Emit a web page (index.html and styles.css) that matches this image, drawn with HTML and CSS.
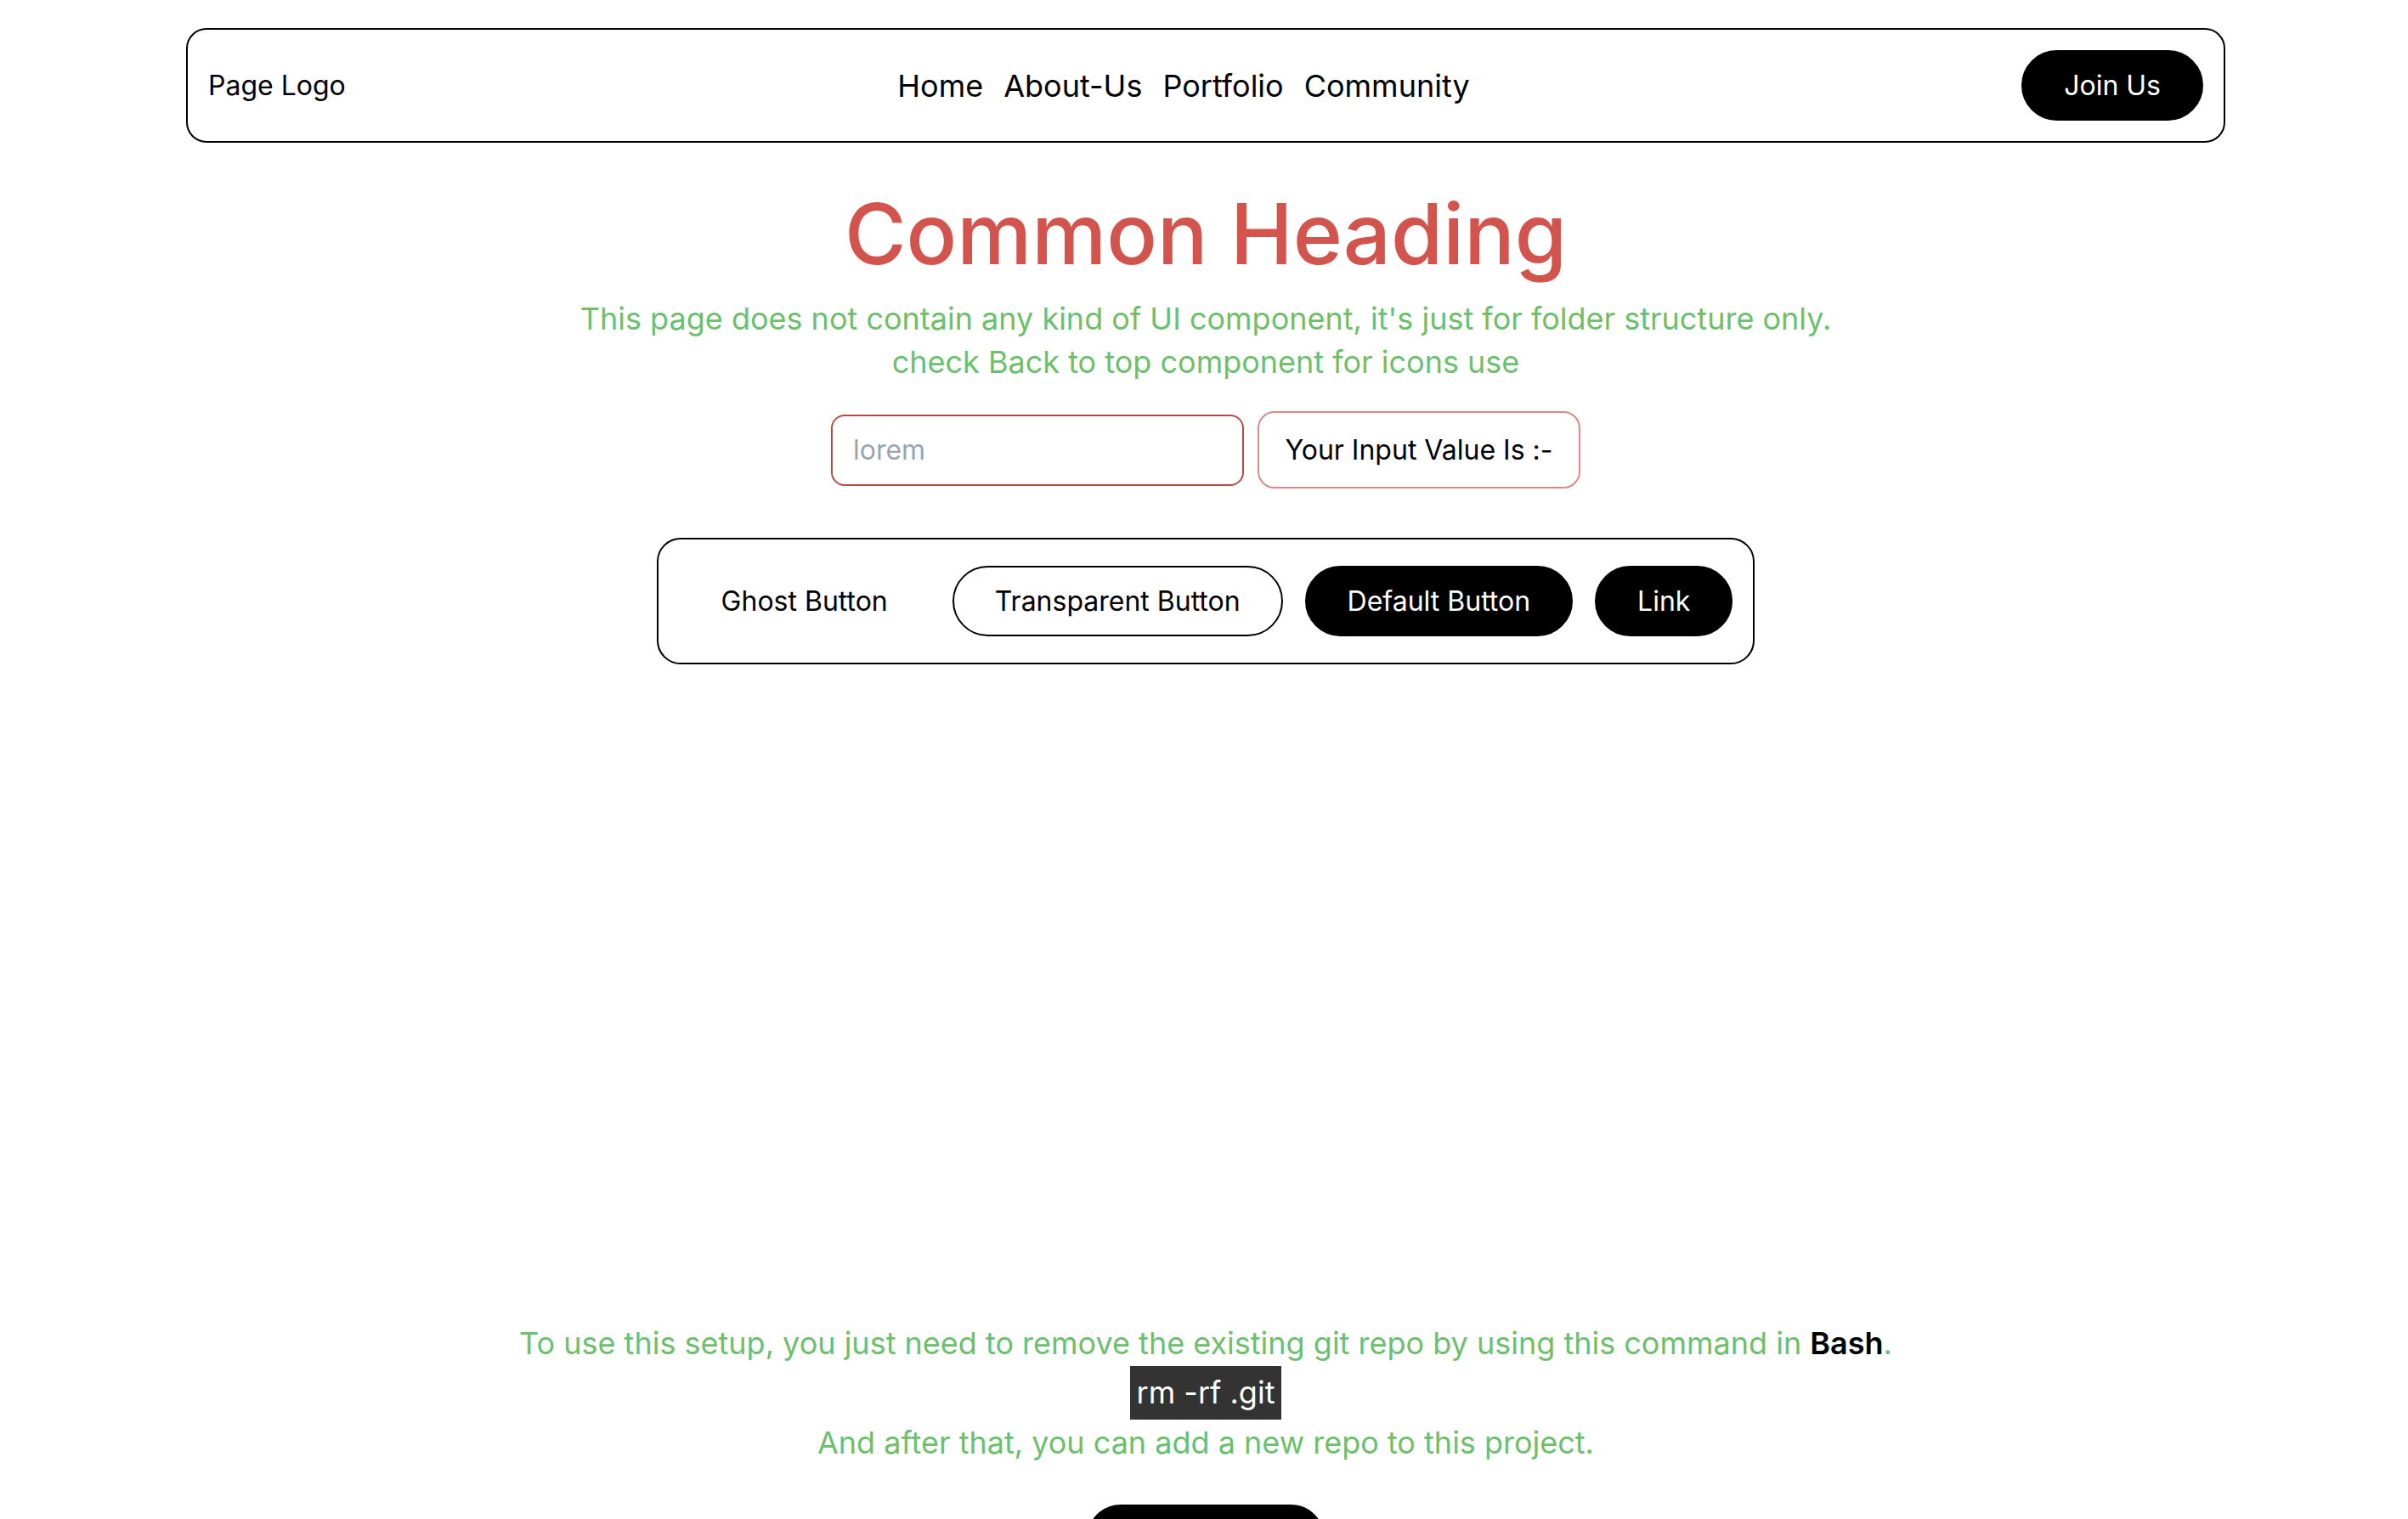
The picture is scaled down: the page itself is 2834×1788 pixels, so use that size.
FILE: index.html
```html
<!DOCTYPE html>
<html lang="en">
<head>
<meta charset="utf-8">
<title>Common Heading</title>
<link rel="stylesheet" href="styles.css">
</head>
<body>
<div class="page">
  <header class="navbar">
    <div class="logo">Page Logo</div>
    <nav class="nav-links">
      <a href="#">Home</a>
      <a href="#">About-Us</a>
      <a href="#">Portfolio</a>
      <a href="#">Community</a>
    </nav>
    <button class="btn btn-default join">Join Us</button>
  </header>

  <main class="main">
    <h1 class="heading">Common Heading</h1>
    <p class="lead">This page does not contain any kind of UI component, it's just for folder structure only.<br>check Back to top component for icons use</p>

    <div class="input-row">
      <input class="text-input" type="text" placeholder="lorem">
      <div class="output-box">Your Input Value Is :-</div>
    </div>

    <div class="button-group">
      <button class="btn btn-ghost">Ghost Button</button>
      <button class="btn btn-transparent">Transparent Button</button>
      <button class="btn btn-default">Default Button</button>
      <button class="btn btn-default">Link</button>
    </div>
  </main>

  <section class="setup">
    <p class="setup-text">To use this setup, you just need to remove the existing git repo by using this command in <strong>Bash</strong>.</p>
    <code class="cmd">rm -rf .git</code>
    <p class="setup-text">And after that, you can add a new repo to this project.</p>
    <button class="btn btn-default bottom-btn">Get Started</button>
  </section>
</div>
</body>
</html>
```

FILE: styles.css
```css
* {
  box-sizing: border-box;
}

html, body {
  margin: 0;
  padding: 0;
  background: #ffffff;
}

body {
  font-family: Inter, "Noto Sans", "Liberation Sans", sans-serif;
  color: #000000;
}

.page {
  padding: 33px 0 0 4px;
  display: flex;
  flex-direction: column;
  align-items: center;
}

.navbar {
  width: 2400px;
  border: 2px solid #000;
  border-radius: 24px;
  padding: 24px;
  display: flex;
  align-items: center;
  justify-content: space-between;
}

.logo {
  font-size: 32px;
  line-height: 48px;
}

.nav-links {
  display: flex;
  gap: 24px;
}

.nav-links a {
  color: #000;
  text-decoration: none;
  font-size: 36px;
  line-height: 48px;
}

.btn {
  font-family: inherit;
  font-size: 32px;
  line-height: 47px;
  padding: 16px 48px;
  border: 2px solid transparent;
  border-radius: 999px;
  cursor: pointer;
  background: transparent;
  color: #000;
}

.btn-default {
  background: #000;
  border-color: #000;
  color: #fff;
}

.btn-transparent {
  border-color: #000;
}

.btn-ghost {
  border-color: transparent;
}

.join {
  padding: 16px 48px;
  line-height: 47px;
}

.main {
  display: flex;
  flex-direction: column;
  align-items: center;
}

.heading {
  margin: 40px 0 0;
  font-size: 99px;
  line-height: 134px;
  font-weight: 500;
  color: #d2544d;
}

.lead {
  margin: 8px 0 0;
  text-align: center;
  font-size: 36px;
  line-height: 51px;
  color: #6cbf6c;
}

.input-row {
  margin-top: 32px;
  display: flex;
  align-items: center;
  gap: 16px;
}

.text-input {
  width: 486px;
  height: 84px;
  border: 2px solid #b54a46;
  border-radius: 16px;
  padding: 0 24px;
  font-family: inherit;
  font-size: 32px;
  color: #000;
  outline: none;
}

.text-input::placeholder {
  color: #9ca3af;
}

.output-box {
  width: 380px;
  height: 91px;
  border: 2px solid #d98a88;
  border-radius: 20px;
  display: flex;
  align-items: center;
  justify-content: center;
  font-size: 32px;
}

.button-group {
  margin-top: 58px;
  display: flex;
  align-items: center;
  gap: 26px;
  padding: 31px 24px;
  border: 2px solid #000;
  border-radius: 28px;
}

.setup {
  margin-top: 772px;
  display: flex;
  flex-direction: column;
  align-items: center;
}

.setup-text {
  margin: 0;
  font-size: 36px;
  line-height: 54px;
  color: #6cbf6c;
  text-align: center;
}

.setup-text strong {
  color: #000;
  font-weight: 600;
}

.cmd {
  display: block;
  background: #333333;
  color: #fff;
  font-family: inherit;
  font-size: 36px;
  line-height: 63px;
  padding: 0 8px;
}

.bottom-btn {
  margin-top: 46px;
  width: 282px;
}
```
